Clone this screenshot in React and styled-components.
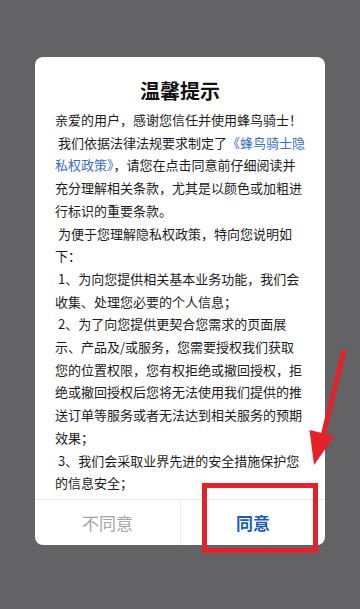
import React from "react";
import styled, { createGlobalStyle } from "styled-components";

const GlobalStyle = createGlobalStyle`
  html, body {
    margin: 0;
    padding: 0;
    background: #636365;
  }
  body {
    font-family: "Noto Sans CJK SC", "Noto Sans", sans-serif;
  }
`;

const Screen = styled.div`
  position: relative;
  width: 360px;
  height: 609px;
  overflow: hidden;
  background: #636365;
  padding-top: 57px;
  box-sizing: border-box;
  display: flex;
  flex-direction: column;
  align-items: center;
`;

const Dialog = styled.div`
  width: 290px;
  height: 488px;
  background: #ffffff;
  border-radius: 8px;
  display: flex;
  flex-direction: column;
  overflow: hidden;
`;

const Title = styled.h2`
  margin: 0;
  padding: 22px 0 6px;
  font-size: 20px;
  line-height: 24px;
  font-weight: bold;
  color: #111;
  text-align: center;
`;

const Body = styled.div`
  flex: 1;
  overflow: hidden;
  padding: 0 19px 0 20px;
`;

const Paragraph = styled.p`
  margin: 0;
  font-size: 13px;
  line-height: 22.7px;
  color: #1c1c1c;
`;

const Link = styled.span`
  color: #3a6cc6;
`;

const Footer = styled.div`
  display: grid;
  grid-template-columns: 1fr 1fr;
  height: 45px;
  border-top: 1px solid #e6e6e6;
`;

const Action = styled.div`
  display: flex;
  align-items: center;
  justify-content: center;
  font-size: 17px;
  color: ${(p) => (p.$primary ? "#1b5db5" : "#a3a3a3")};
  font-weight: ${(p) => (p.$primary ? "bold" : "normal")};
  border-left: ${(p) => (p.$primary ? "1px solid #ececec" : "none")};
`;

const Highlight = styled.div`
  position: absolute;
  left: 202px;
  top: 483px;
  width: 116px;
  height: 70px;
  box-sizing: border-box;
  border: 5px solid #e5222b;
  pointer-events: none;
`;

const ArrowSvg = styled.svg`
  position: absolute;
  left: 300px;
  top: 340px;
  width: 60px;
  height: 140px;
  pointer-events: none;
`;

const paragraphs = [
  "亲爱的用户，感谢您信任并使用蜂鸟骑士！",
  null,
  "\u00a0为便于您理解隐私权政策，特向您说明如下：",
  "\u00a01、为向您提供相关基本业务功能，我们会收集、处理您必要的个人信息；",
  "\u00a02、为了向您提供更契合您需求的页面展示、产品及/或服务，您需要授权我们获取您的位置权限，您有权拒绝或撤回授权，拒绝或撤回授权后您将无法使用我们提供的推送订单等服务或者无法达到相关服务的预期效果；",
  "\u00a03、我们会采取业界先进的安全措施保护您的信息安全；",
  "\u00a04、未经您同意，我们不会从第三方获取、共享或对外提供您的信息；",
];

export default function App() {
  return (
    <>
      <GlobalStyle />
      <Screen>
        <Dialog>
          <Title>温馨提示</Title>
          <Body>
            {paragraphs.map((text, i) =>
              text === null ? (
                <Paragraph key={i}>
                  {"\u00a0我们依据法律法规要求制定了"}
                  <Link>《蜂鸟骑士隐私权政策》</Link>
                  ，请您在点击同意前仔细阅读并充分理解相关条款，尤其是以颜色或加粗进行标识的重要条款。
                </Paragraph>
              ) : (
                <Paragraph key={i}>{text}</Paragraph>
              )
            )}
          </Body>
          <Footer>
            <Action>不同意</Action>
            <Action $primary>同意</Action>
          </Footer>
        </Dialog>
        <Highlight />
        <ArrowSvg viewBox="0 0 60 140">
          <line x1="44" y1="10" x2="23" y2="96" stroke="#e5222b" strokeWidth="5" />
          <polygon points="14,125 9.5,90 34.5,96" fill="#e5222b" />
        </ArrowSvg>
      </Screen>
    </>
  );
}
